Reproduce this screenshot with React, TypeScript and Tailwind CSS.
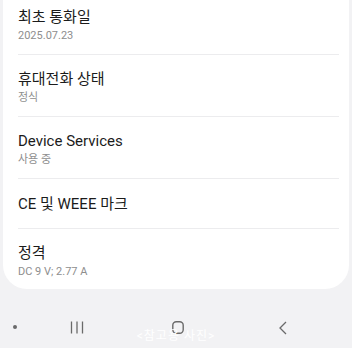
import * as React from 'react';

type Item = { title: string; sub?: string };

const items: Item[] = [
  { title: '최초 통화일', sub: '2025.07.23' },
  { title: '휴대전화 상태', sub: '정식' },
  { title: 'Device Services', sub: '사용 중' },
  { title: 'CE 및 WEEE 마크' },
  { title: '정격', sub: 'DC 9 V; 2.77 A' },
];

function Row({ item, last }: { item: Item; last: boolean }) {
  let pad = item.sub ? 'pt-[14px] pb-[11px]' : 'pt-[15px] pb-[14px]';
  if (last) pad = 'pt-[14px] pb-[10px]';
  return (
    <div className="pl-[15px] pr-[10px]">
      <div className={pad + (last ? '' : ' border-b border-[#ececee]')}>
        <div className="text-[15px] leading-[20px] text-[#1b1b1b]">{item.title}</div>
        {item.sub && (
          <div className="mt-[1px] text-[11px] leading-[15px] text-[#8e8e8e]">{item.sub}</div>
        )}
      </div>
    </div>
  );
}

export default function App() {
  return (
    <div
      className="w-[352px] h-[348px] overflow-hidden bg-[#f2f2f4] flex flex-col"
      style={{ fontFamily: 'Roboto, "Noto Sans CJK KR", sans-serif' }}
    >
      <div className="mx-[3px] -mt-[7px] bg-white rounded-b-[24px]">
        {items.map((it, i) => (
          <Row key={it.title} item={it} last={i === items.length - 1} />
        ))}
      </div>

      <div className="relative flex-1">
        <div className="absolute left-[13px] top-[36px] w-[4px] h-[4px] rounded-full bg-[#6a6a6a]" />
        <svg className="absolute left-[70px] top-[32px]" width="14" height="13" viewBox="0 0 14 13">
          <path d="M1.5 0.5V12.5M7 0.5V12.5M12.5 0.5V12.5" stroke="#6a6a6a" strokeWidth="1.3" />
        </svg>
        <svg className="absolute left-[172px] top-[32px]" width="12" height="13" viewBox="0 0 12 13">
          <rect x="0.8" y="0.8" width="10.4" height="11.4" rx="3.5" fill="none" stroke="#6a6a6a" strokeWidth="1.4" />
        </svg>
        <svg className="absolute left-[278px] top-[32px]" width="10" height="14" viewBox="0 0 10 14">
          <path d="M8 1L2 7L8 13" fill="none" stroke="#6a6a6a" strokeWidth="1.3" />
        </svg>
        <div className="absolute left-0 right-0 top-[40px] text-center text-[12px] leading-[14px] text-white tracking-[1px]">
          &lt;참고용 사진&gt;
        </div>
      </div>
    </div>
  );
}
